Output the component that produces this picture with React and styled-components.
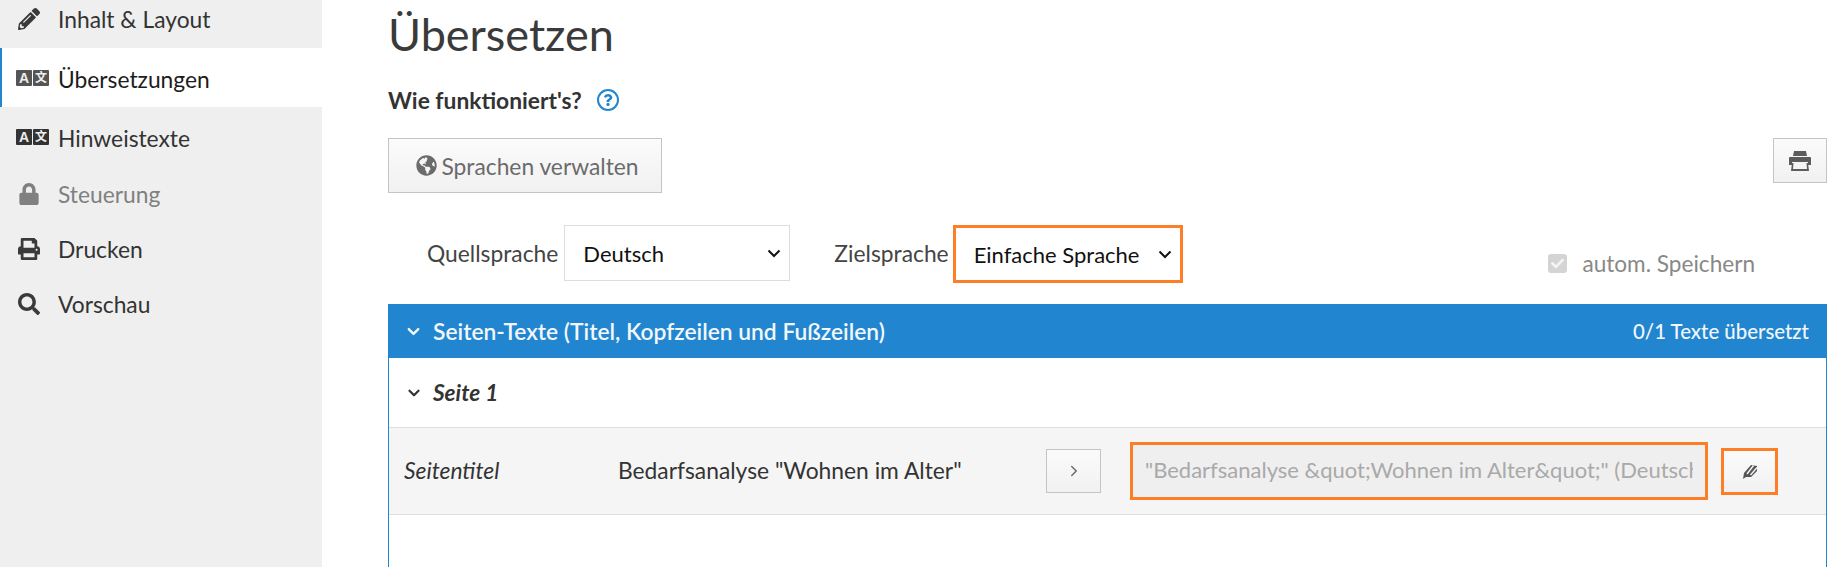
import React from 'react';
import styled, {createGlobalStyle} from 'styled-components';
import {FaPencilAlt, FaLock, FaPrint, FaSearch, FaGlobeAmericas, FaCheck, FaQuestion} from 'react-icons/fa';
import {FiChevronDown, FiChevronRight} from 'react-icons/fi';

const chevron = "url(\"data:image/svg+xml,%3Csvg xmlns='http://www.w3.org/2000/svg' width='14' height='9' viewBox='0 0 14 9'%3E%3Cpath d='M1.5 1.5 L7 7 L12.5 1.5' fill='none' stroke='%23111' stroke-width='2'/%3E%3C/svg%3E\")";

const Global = createGlobalStyle`
  html, body { margin: 0; padding: 0; height: 567px; overflow: hidden; background: #fff; }
  body { font-family: Lato, "Noto Sans", sans-serif; font-size: 23px; color: #333; }
`
const Page = styled.div`
  display: flex;
  width: 1838px;
  height: 567px;
  overflow: hidden;
`
const Sidebar = styled.nav`
  width: 322px;
  flex: none;
  background: #efefef;
`
const NavItem = styled.div`
  display: flex;
  align-items: center;
  box-sizing: border-box;
  height: ${props => props.$h}px;
  padding-left: ${props => props.$active ? 16 : 18}px;
  padding-bottom: ${props => props.$pb || 0}px;
  padding-top: ${props => props.$pt || 0}px;
  border-left: ${props => props.$active ? '2px solid #2185d0' : 'none'};
  background: ${props => props.$active ? '#fff' : 'transparent'};
  color: ${props => props.$muted ? '#808080' : props.$active ? '#1c1c1c' : '#333'};
  font-size: 22.8px;
`
const NavIcon = styled.span`
  display: flex;
  justify-content: center;
  width: 22px;
  margin-right: 18px;
  font-size: 22px;
  color: ${props => props.$muted ? '#808080' : '#3a3a3a'};
`
const TileRow = styled.span`
  display: flex;
  gap: 1px;
  width: 33px;
  margin-right: 9px;
  margin-left: -2px;
  margin-top: -2px;
`
const Tile = styled.span`
  display: flex;
  align-items: center;
  justify-content: center;
  width: 16px;
  height: 16px;
  border-radius: 1px;
  background: ${props => props.$dark ? '#333' : '#555'};
  color: #eee;
  font-size: ${props => props.$small}px;
  font-weight: 700;
  line-height: 1;
  font-family: "Liberation Sans", "Noto Sans CJK SC", sans-serif;
`
const Main = styled.main`
  flex: 1;
  padding: 0 11px 0 66px;
`
const Title = styled.h1`
  margin: 5px 0 0;
  font-size: 45px;
  line-height: 58px;
  font-weight: 400;
  color: #3a3a3a;
`
const HelpRow = styled.div`
  display: flex;
  align-items: center;
  gap: 15px;
  height: 26px;
  margin-top: 24px;
  font-weight: 700;
  font-size: 22.8px;
`
const HelpIcon = styled.span`
  display: flex;
  align-items: center;
  justify-content: center;
  box-sizing: border-box;
  width: 22px;
  height: 22px;
  border: 2px solid #2185d0;
  border-radius: 50%;
  color: #2185d0;
  font-size: 12px;
`
const Toolbar = styled.div`
  display: flex;
  justify-content: space-between;
  align-items: flex-start;
  margin-top: 25px;
`
const Button = styled.button`
  display: flex;
  align-items: center;
  justify-content: center;
  gap: 4px;
  box-sizing: border-box;
  padding: 0 0 0 ${props => props.$pl || 0}px;
  width: ${props => props.$w}px;
  height: ${props => props.$h}px;
  border: 1px solid ${props => props.$mark ? '#fd7e26' : '#c4c4c4'};
  border-width: ${props => props.$mark ? 3 : 1}px;
  background: linear-gradient(#fbfbfb, #f1f1f1);
  color: #6b6b6b;
  font-family: inherit;
  font-size: 22.8px;
`
const LangRow = styled.div`
  display: flex;
  align-items: flex-start;
  height: 79px;
  margin-top: 32px;
  padding-left: 39px;
  position: relative;
`
const LangLabel = styled.label`
  display: flex;
  align-items: center;
  height: 56px;
  margin-right: ${props => props.$gap}px;
  color: #444;
  font-size: 22.8px;
  white-space: nowrap;
`
const Select = styled.select`
  box-sizing: border-box;
  width: ${props => props.$w}px;
  height: ${props => props.$mark ? 58 : 56}px;
  margin-right: 44px;
  padding: 0 18px;
  border: ${props => props.$mark ? '3px solid #fd7e26' : '1px solid #ddd'};
  border-radius: 0;
  appearance: none;
  background: #fff ${chevron} no-repeat right 8px center;
  color: #111;
  font-family: inherit;
  font-size: 22px;
`
const AutoSave = styled.label`
  display: flex;
  align-items: center;
  gap: 15px;
  position: absolute;
  right: 72px;
  top: 25px;
  color: #888;
  font-size: 22.6px;
`
const CheckBox = styled.span`
  display: flex;
  align-items: center;
  justify-content: center;
  width: 19px;
  height: 19px;
  border-radius: 3px;
  background: #d4d4d4;
  color: #f4f4f4;
  font-size: 13px;
`
const Panel = styled.section`
  box-sizing: border-box;
  width: 1439px;
  height: 300px;
  border: 1px solid #2185d0;
  border-top: none;
`
const PanelHead = styled.div`
  display: flex;
  align-items: center;
  justify-content: space-between;
  box-sizing: border-box;
  height: 54px;
  margin: 0 -1px;
  padding: 0 18px 0 16px;
  background: #2185d0;
  color: #f2f7fb;
  font-size: 22.8px;
  font-weight: 600;
`
const HeadLeft = styled.span`
  display: flex;
  align-items: center;
  gap: 10px;
`
const Count = styled.span`
  font-size: 20.4px;
  font-weight: 500;
`
const GroupHead = styled.div`
  display: flex;
  align-items: center;
  gap: 10px;
  box-sizing: border-box;
  height: 69px;
  padding-left: 16px;
  font-style: italic;
  font-weight: 700;
  font-size: 22.6px;
`
const Row = styled.div`
  display: flex;
  align-items: center;
  box-sizing: border-box;
  height: 88px;
  padding-left: 15px;
  background: #f5f5f5;
  border-top: 1px solid #dedede;
  border-bottom: 1px solid #dedede;
`
const RowLabel = styled.span`
  width: 214px;
  margin-top: -2px;
  font-style: italic;
  font-size: 22.8px;
  color: #333;
`
const RowText = styled.span`
  width: 428px;
  margin-top: -2px;
  font-size: 22.8px;
  color: #333;
`
const Field = styled.input`
  box-sizing: border-box;
  width: 578px;
  height: 58px;
  margin: 0 13px 0 29px;
  padding: 0 12px 3px;
  border: 3px solid #fd7e26;
  background: #efefef;
  font-family: inherit;
  font-size: 22px;
  &::placeholder { color: #a9a9a9; opacity: 1; }
`

const Translate = ({dark}) => (
  <TileRow>
    <Tile $dark={dark} $small={14}>A</Tile>
    <Tile $dark={dark} $small={12}>文</Tile>
  </TileRow>
)

const FlatPrinter = () => (
  <svg width="24" height="22" viewBox="0 0 24 22" fill="#5c5c5c">
    <path d="M6 1 H18 L19 6 H5 Z" />
    <path d="M2 7 H22 Q23 7 23 8 V15 H20 V12 H4 V15 H1 V8 Q1 7 2 7 Z" />
    <path d="M4 13 H5.5 L5 19 H19 L18.5 13 H20 L21 21 H3 Z" />
  </svg>
)

const NibIcon = () => (
  <svg width="16" height="17" viewBox="0 0 16 17">
    <path d="M1 16 L2 10 L9 2 L15 3 L15 8 L9 14 L4 14 Z" fill="#555" />
    <path d="M5 11 L11.5 2.5 M8.5 12 L15 4.5" stroke="#f6f6f6" strokeWidth="1.4" fill="none" />
  </svg>
)

const App = () => {
  return (
    <Page>
      <Global/>
      <Sidebar>
        <NavItem $h={48} $pb={11}><NavIcon><FaPencilAlt/></NavIcon>Inhalt &amp; Layout</NavItem>
        <NavItem $h={59} $pt={2} $active><Translate/>Übersetzungen</NavItem>
        <NavItem $h={59} $pt={2}><Translate dark/>Hinweistexte</NavItem>
        <NavItem $h={55} $muted><NavIcon $muted><FaLock/></NavIcon>Steuerung</NavItem>
        <NavItem $h={56}><NavIcon><FaPrint/></NavIcon>Drucken</NavItem>
        <NavItem $h={55} $pb={1}><NavIcon><FaSearch/></NavIcon>Vorschau</NavItem>
      </Sidebar>
      <Main>
        <Title>Übersetzen</Title>
        <HelpRow>Wie funktioniert's? <HelpIcon><FaQuestion/></HelpIcon></HelpRow>
        <Toolbar>
          <Button $w={274} $h={55} $pl={5}><FaGlobeAmericas size={21}/>Sprachen verwalten</Button>
          <Button $w={54} $h={45}><FlatPrinter/></Button>
        </Toolbar>
        <LangRow>
          <LangLabel $gap={6}>Quellsprache</LangLabel>
          <Select $w={226} defaultValue="de"><option value="de">Deutsch</option></Select>
          <LangLabel $gap={4}>Zielsprache</LangLabel>
          <Select $w={230} $mark defaultValue="es"><option value="es">Einfache Sprache</option></Select>
          <AutoSave><CheckBox><FaCheck/></CheckBox>autom. Speichern</AutoSave>
        </LangRow>
        <Panel>
          <PanelHead>
            <HeadLeft><FiChevronDown size={19} strokeWidth={3}/>Seiten-Texte (Titel, Kopfzeilen und Fußzeilen)</HeadLeft>
            <Count>0/1 Texte übersetzt</Count>
          </PanelHead>
          <GroupHead><FiChevronDown size={18} strokeWidth={3}/>Seite 1</GroupHead>
          <Row>
            <RowLabel>Seitentitel</RowLabel>
            <RowText>Bedarfsanalyse "Wohnen im Alter"</RowText>
            <Button $w={55} $h={44}><FiChevronRight size={18}/></Button>
            <Field readOnly placeholder={'"Bedarfsanalyse &quot;Wohnen im Alter&quot;" (Deutsch)'}/>
            <Button $w={57} $h={47} $mark><NibIcon/></Button>
          </Row>
        </Panel>
      </Main>
    </Page>
  );
}

export default App;
